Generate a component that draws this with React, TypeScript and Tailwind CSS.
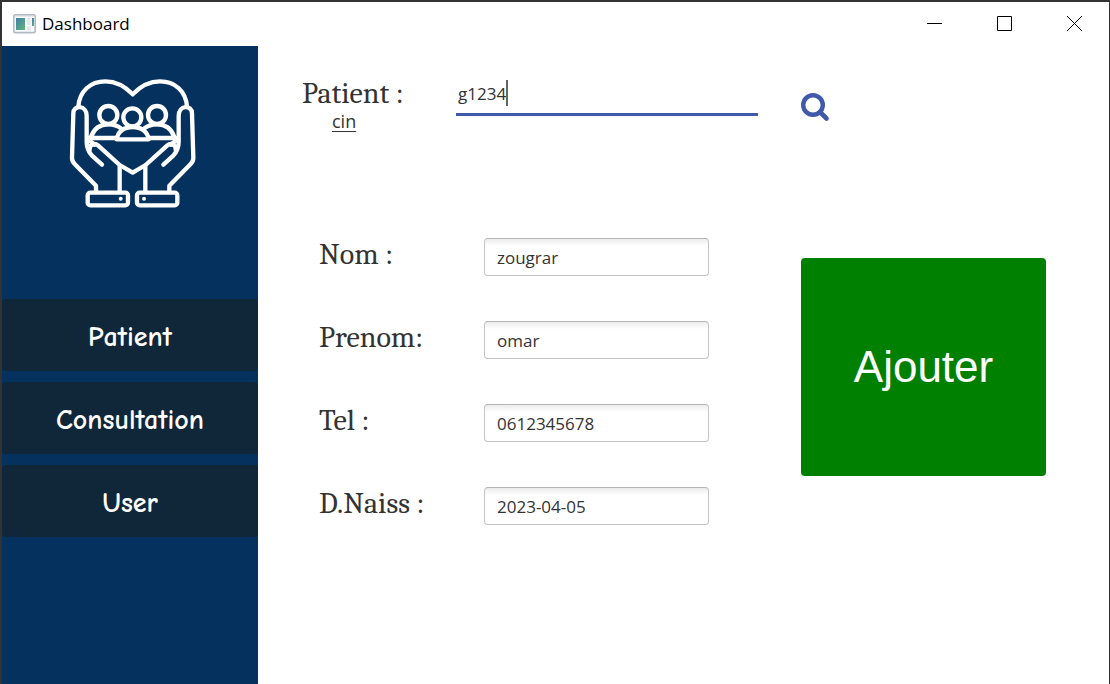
import React, { useState } from "react";

const uiFont = "font-['Segoe_UI','Open_Sans',sans-serif]";
const labelFont = "font-['Cambria','Liberation_Serif',serif]";

function AppIcon() {
  return (
    <svg width="23" height="20" viewBox="0 0 23 20" aria-hidden="true">
      <rect x="0.75" y="0.75" width="21.5" height="18" rx="1.5" fill="#e9ebf0" stroke="#b4b9c3" strokeWidth="1.5" />
      <rect x="2" y="3" width="19" height="14" fill="#f8f9fb" />
      <defs>
        <linearGradient id="pane" x1="0" y1="0" x2="1" y2="1">
          <stop offset="0" stopColor="#3d7fa6" />
          <stop offset="1" stopColor="#62b67c" />
        </linearGradient>
      </defs>
      <rect x="3" y="4" width="9" height="12" fill="url(#pane)" />
      <rect x="14" y="4" width="3.5" height="7" fill="#e4e6ea" />
      <rect x="19" y="4" width="2" height="8" fill="url(#pane)" />
      <rect x="14" y="12.5" width="4" height="4" fill="#e4e6ea" />
    </svg>
  );
}

function CareLogo() {
  return (
    <svg
      width="129"
      height="133"
      viewBox="54 51 387 399"
      fill="none"
      stroke="#ffffff"
      strokeWidth="13"
      strokeLinecap="round"
      strokeLinejoin="round"
      aria-label="Logo"
    >
      <path d="M85 140C88 94 121 64 166 64C202 64 228 82 248 103C268 82 294 64 330 64C375 64 408 94 411 140" />
      <path d="M138 393V377L74 312Q66 304 66 294L70 160C70 134 110 134 110 168V246C110 261 116 276 126 287L156 314" />
      <path d="M358 393V377L422 312Q430 304 430 294L426 160C426 134 386 134 386 168V246C386 261 380 276 370 287L340 314" />
      <path d="M119 270C117 256 132 246 144 256L209 315L248 338L287 315L352 256C364 246 379 256 377 270" />
      <path d="M116 240L134 254M380 240L362 254" />
      <path d="M209 317V393M286 317V393" />
      <circle cx="175" cy="165" r="27" />
      <circle cx="321" cy="165" r="27" />
      <circle cx="247" cy="172" r="27" />
      <path d="M118 234H198M298 234H378" />
      <path d="M124 229C132 206 151 193 175 193C190 193 203 197 213 205" />
      <path d="M372 229C364 206 345 193 321 193C306 193 293 197 283 205" />
      <path d="M200 238C203 214 223 201 248 201C273 201 293 214 296 238Z" />
      <rect x="113" y="398" width="121" height="38" rx="8" />
      <rect x="261" y="398" width="121" height="38" rx="8" />
      <circle cx="212" cy="416" r="6" fill="#ffffff" stroke="none" />
      <circle cx="282" cy="416" r="6" fill="#ffffff" stroke="none" />
    </svg>
  );
}

function TitleBar() {
  return (
    <header className="flex h-11 shrink-0 items-center justify-between bg-white">
      <div className="flex items-center gap-1.5 pl-[11px]">
        <AppIcon />
        <h1 className={`text-[17px] leading-6 text-black ${uiFont}`}>Dashboard</h1>
      </div>
      <div className="flex h-full pb-0.5">
        <button type="button" aria-label="Minimize" className="flex w-[70px] items-center justify-center">
          <svg width="15" height="15" viewBox="0 0 15 15" stroke="#000" aria-hidden="true"><path d="M0 7.5H15" /></svg>
        </button>
        <button type="button" aria-label="Maximize" className="flex w-[70px] items-center justify-center">
          <svg width="15" height="15" viewBox="0 0 15 15" fill="none" stroke="#000" aria-hidden="true"><path d="M.5 .5H14.5V14.5H.5Z" /></svg>
        </button>
        <button type="button" aria-label="Close" className="flex w-[70px] items-center justify-center">
          <svg width="15" height="15" viewBox="0 0 15 15" stroke="#000" aria-hidden="true"><path d="M0 0L15 15M15 0L0 15" /></svg>
        </button>
      </div>
    </header>
  );
}

function Sidebar() {
  return (
    <aside className="flex w-64 shrink-0 flex-col bg-[#05315e]">
      <div className="flex justify-center pt-[31px] pl-1">
        <CareLogo />
      </div>
      <nav className="mt-[89px] flex flex-col gap-[11px]">
        {["Patient", "Consultation", "User"].map((name) => (
          <button
            key={name}
            type="button"
            className="h-[72px] rounded bg-[#102639] pt-1 font-['Comic_Sans_MS','Comic_Neue','Open_Sans',sans-serif] text-[28px] leading-9 font-bold text-white"
          >
            {name}
          </button>
        ))}
      </nav>
    </aside>
  );
}

const initialFields = [
  { id: "nom", label: "Nom :", value: "zougrar" },
  { id: "prenom", label: "Prenom:", value: "omar" },
  { id: "tel", label: "Tel :", value: "0612345678" },
  { id: "naissance", label: "D.Naiss :", value: "2023-04-05" },
];

function PatientForm() {
  const [cin, setCin] = useState("g1234");
  const [fields, setFields] = useState(initialFields);

  const update = (id: string, value: string) =>
    setFields(fields.map((field) => (field.id === id ? { ...field, value } : field)));

  return (
    <form
      onSubmit={(event) => event.preventDefault()}
      className="grid grow grid-cols-[154px_minmax(0,302fr)_43px_minmax(0,245fr)] content-start pt-[30px] pr-[63px] pl-11 text-[#333]"
    >
      <label htmlFor="cin" className="flex flex-col">
        <span className={`text-[30px] leading-9 ${labelFont}`}>Patient :</span>
        <span className={`pl-[30px] text-[18px] leading-[18px] underline decoration-1 underline-offset-3 ${uiFont}`}>cin</span>
      </label>
      <div className="relative self-start pt-px">
        <input
          id="cin"
          value={cin}
          onChange={(event) => setCin(event.target.value)}
          className={`h-[39px] w-full border-b-3 border-[#4059a9] pb-1 pl-[2px] text-[17px] outline-none ${uiFont}`}
        />
        <span className="absolute top-1 left-[50px] h-[26px] w-[2px] bg-[#666]" />
      </div>
      <button type="submit" aria-label="Rechercher" className="col-start-4 mt-4 self-start justify-self-start">
        <svg width="29" height="30" viewBox="0 0 29 30" fill="none" stroke="#4059a9" aria-hidden="true">
          <circle cx="12" cy="13" r="9.8" strokeWidth="4.4" />
          <path d="M19 20L25.5 26.5" strokeWidth="4.6" strokeLinecap="round" />
        </svg>
      </button>

      <div className="col-span-2 mt-[108px] flex flex-col gap-[45px]">
        {fields.map((field) => (
          <div key={field.id} className="grid grid-cols-[165px_minmax(0,1fr)] items-start pr-[49px] pl-[17px]">
            <label htmlFor={field.id} className={`text-[30px] leading-[34px] ${labelFont}`}>
              {field.label}
            </label>
            <input
              id={field.id}
              value={field.value}
              onChange={(event) => update(field.id, event.target.value)}
              className={`h-[38px] w-full rounded border border-[#c4c4c4] border-t-[#b5b5b5] bg-linear-to-b from-[#ececec] to-white to-20% px-3 text-[17px] outline-none ${uiFont}`}
            />
          </div>
        ))}
      </div>
      <button
        type="submit"
        className="col-start-4 mt-[128px] h-[218px] rounded bg-[#008000] font-['Arial','Liberation_Sans',sans-serif] text-[44px] text-white"
      >
        Ajouter
      </button>
    </form>
  );
}

export default function App() {
  return (
    <div className="flex min-h-screen flex-col border-t-2 border-r border-l-2 border-[#333] bg-white">
      <TitleBar />
      <div className="flex grow">
        <Sidebar />
        <main className="flex min-w-0 grow">
          <PatientForm />
        </main>
      </div>
    </div>
  );
}
